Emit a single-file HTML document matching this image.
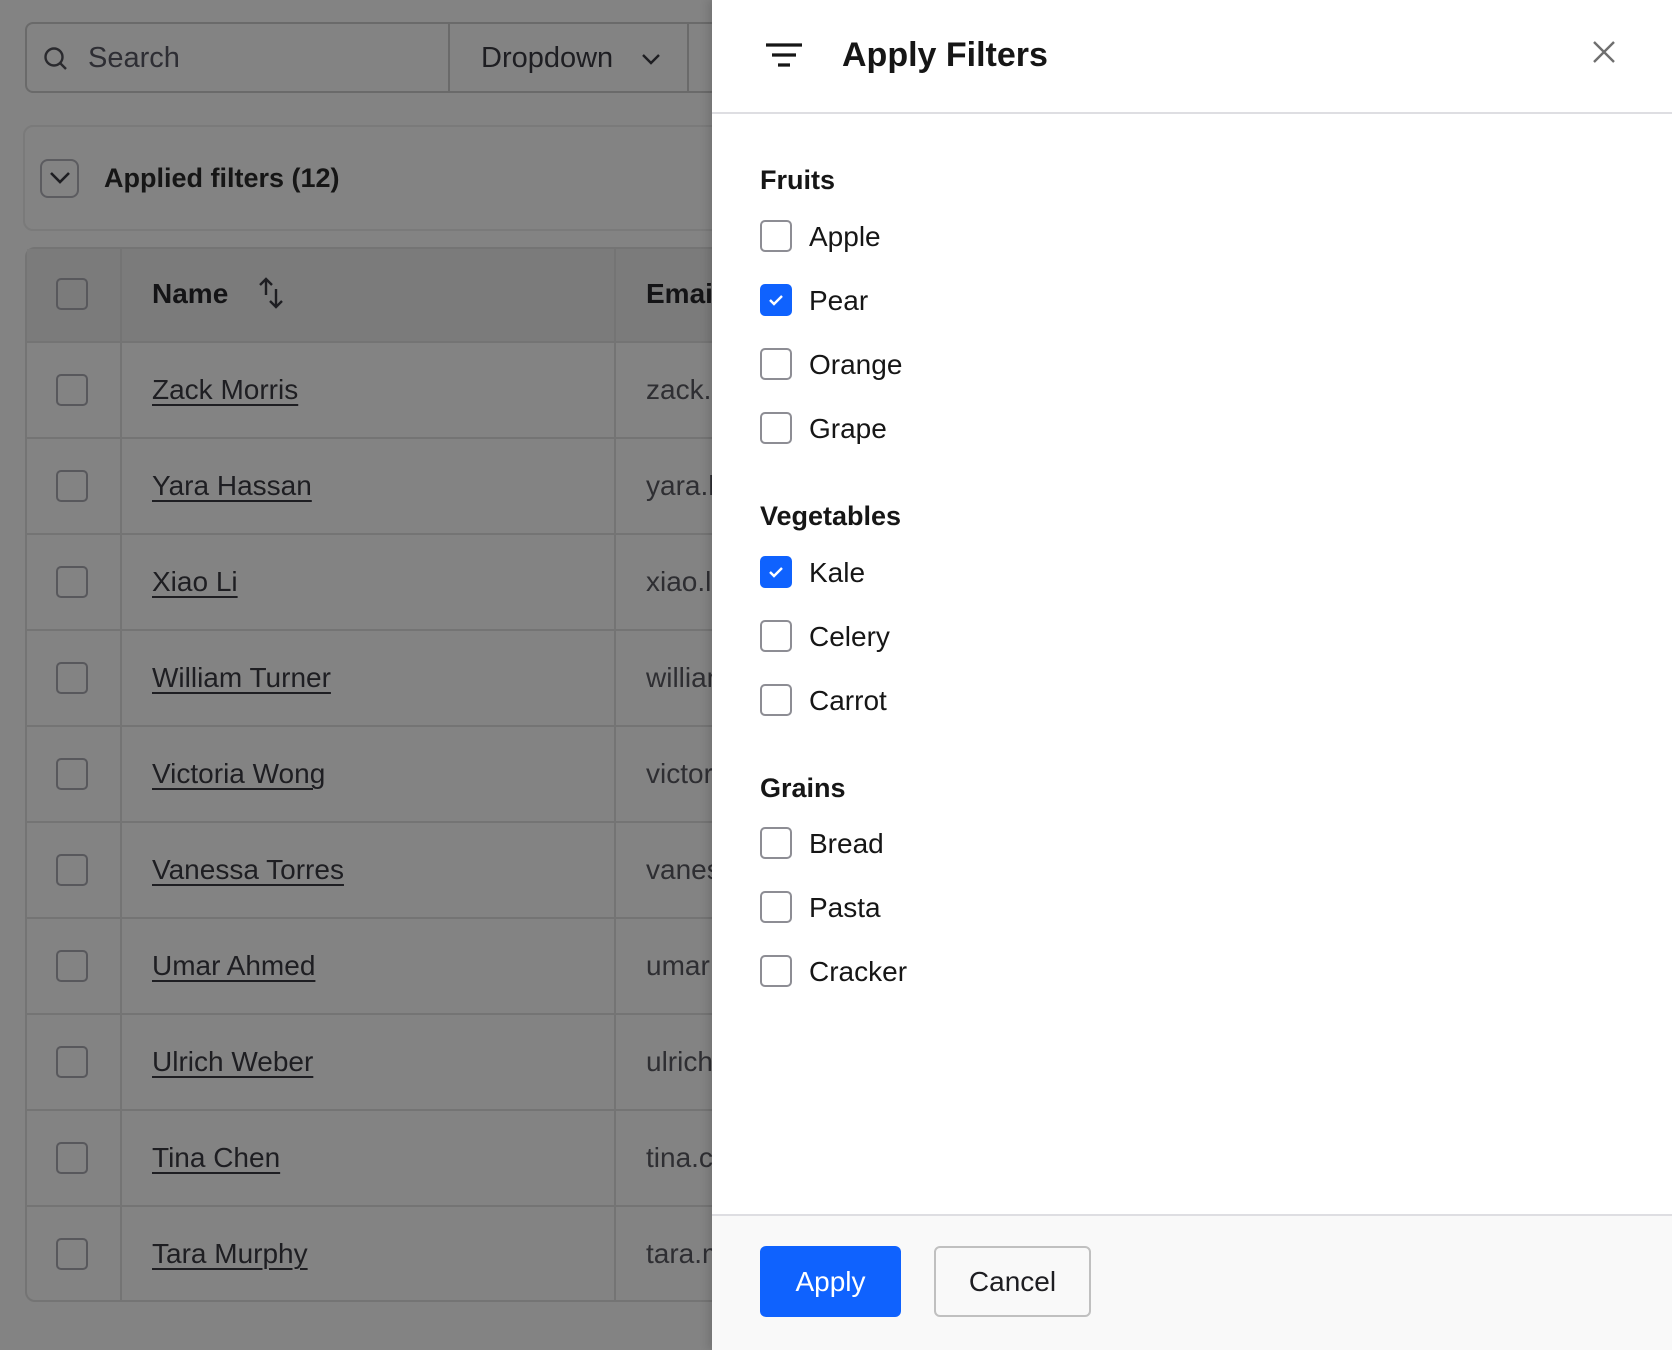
<!DOCTYPE html>
<html><head><meta charset="utf-8"><style>
*{box-sizing:border-box;margin:0;padding:0}
body{width:1672px;height:1350px;overflow:hidden;background:#838383;font-family:"Liberation Sans",sans-serif;position:relative;color:#1c1c20}
.a{position:absolute}
.cb{position:absolute;width:32px;height:32px;border:2px solid #58585c;border-radius:5px}
.name{position:absolute;left:152px;font-size:28px;text-decoration:underline;text-underline-offset:5px;text-decoration-thickness:2px;color:#1e1e22;white-space:nowrap}
.email{position:absolute;left:646px;font-size:28px;color:#2e2e32;white-space:nowrap}
.row{position:absolute;left:25px;width:700px;height:96px;border-top:2px solid #747474}
.panel{position:absolute;left:712px;top:0;width:960px;height:1350px;background:#fff;box-shadow:-4px 0 8px rgba(0,0,0,.12)}
.h{position:absolute;left:48px;font-size:27px;font-weight:bold;color:#161616}
.pc{position:absolute;left:48px;width:32px;height:32px;border:2px solid #8d8d94;border-radius:5px;background:#fff}
.pc.on{background:#0f62fe;border-color:#0f62fe}
.pl{position:absolute;left:97px;font-size:28px;color:#161616}
</style></head><body>
<div class="a" style="left:25px;top:22px;width:700px;height:71px;border:2px solid #6a6a6a;border-radius:8px 0 0 8px"></div>
<div class="a" style="left:448px;top:22px;width:2px;height:71px;background:#6a6a6a"></div>
<div class="a" style="left:687px;top:22px;width:2px;height:71px;background:#6a6a6a"></div>
<svg class="a" style="left:42px;top:45px" width="28" height="28" viewBox="0 0 28 28"><circle cx="12" cy="12" r="8.5" fill="none" stroke="#2a2a2e" stroke-width="2.4"/><path d="M18 18l6 6" stroke="#2a2a2e" stroke-width="2.4"/></svg>
<div class="a" style="left:88px;top:42px;font-size:29px;color:#2e2e34">Search</div>
<div class="a" style="left:481px;top:42px;font-size:29px;color:#1e1e22">Dropdown</div>
<svg class="a" style="left:641px;top:52px" width="20" height="14" viewBox="0 0 20 14"><path d="M2 3l8 8 8-8" fill="none" stroke="#1e1e22" stroke-width="2.4"/></svg>
<div class="a" style="left:23px;top:125px;width:720px;height:106px;border:2px solid #7a7a7a;border-radius:10px"></div>
<div class="a" style="left:40px;top:159px;width:39px;height:39px;border:2px solid #5c5c60;border-radius:8px"></div>
<svg class="a" style="left:48px;top:170px" width="24" height="16" viewBox="0 0 24 16"><path d="M3 3l9 9 9-9" fill="none" stroke="#1e1e22" stroke-width="2.6"/></svg>
<div class="a" style="left:104px;top:163px;font-size:27px;font-weight:bold;color:#161616">Applied filters (12)</div>
<div class="a" style="left:25px;top:247px;width:720px;height:1055px;border:2px solid #747474;border-radius:10px 0 0 10px"></div>
<div class="a" style="left:27px;top:249px;width:700px;height:92px;background:#7b7b7b"></div>
<div class="a" style="left:120px;top:247px;width:2px;height:1055px;background:#747474"></div>
<div class="a" style="left:614px;top:247px;width:2px;height:1055px;background:#747474"></div>
<div class="cb" style="left:56px;top:278px"></div>
<div class="a" style="left:152px;top:278px;font-size:28px;font-weight:bold;color:#141416">Name</div>
<svg class="a" style="left:255px;top:275px" width="34" height="36" viewBox="0 0 34 36"><path d="M11 20V4M5 10l6-6 6 6M21 14v18M15 26l6 6 6-6" fill="none" stroke="#1e1e22" stroke-width="2.4"/></svg>
<div class="a" style="left:646px;top:278px;font-size:28px;font-weight:bold;color:#141416">Email</div>

<div class="row" style="top:341px"></div><div class="cb" style="left:56px;top:374px"></div><div class="name" style="top:374px">Zack Morris</div><div class="email" style="top:374px">zack.morris</div>
<div class="row" style="top:437px"></div><div class="cb" style="left:56px;top:470px"></div><div class="name" style="top:470px">Yara Hassan</div><div class="email" style="top:470px">yara.hassan</div>
<div class="row" style="top:533px"></div><div class="cb" style="left:56px;top:566px"></div><div class="name" style="top:566px">Xiao Li</div><div class="email" style="top:566px">xiao.li</div>
<div class="row" style="top:629px"></div><div class="cb" style="left:56px;top:662px"></div><div class="name" style="top:662px">William Turner</div><div class="email" style="top:662px">william</div>
<div class="row" style="top:725px"></div><div class="cb" style="left:56px;top:758px"></div><div class="name" style="top:758px">Victoria Wong</div><div class="email" style="top:758px">victoria</div>
<div class="row" style="top:821px"></div><div class="cb" style="left:56px;top:854px"></div><div class="name" style="top:854px">Vanessa Torres</div><div class="email" style="top:854px">vanessa</div>
<div class="row" style="top:917px"></div><div class="cb" style="left:56px;top:950px"></div><div class="name" style="top:950px">Umar Ahmed</div><div class="email" style="top:950px">umar</div>
<div class="row" style="top:1013px"></div><div class="cb" style="left:56px;top:1046px"></div><div class="name" style="top:1046px">Ulrich Weber</div><div class="email" style="top:1046px">ulrich</div>
<div class="row" style="top:1109px"></div><div class="cb" style="left:56px;top:1142px"></div><div class="name" style="top:1142px">Tina Chen</div><div class="email" style="top:1142px">tina.chen</div>
<div class="row" style="top:1205px"></div><div class="cb" style="left:56px;top:1238px"></div><div class="name" style="top:1238px">Tara Murphy</div><div class="email" style="top:1238px">tara.murphy</div>

<div class="panel">
  <svg class="a" style="left:54px;top:40px" width="38" height="30" viewBox="0 0 38 30"><path d="M0 5h36M6 15h24M12 25h12" stroke="#161616" stroke-width="3.2"/></svg>
  <div class="a" style="left:130px;top:36px;font-size:34px;font-weight:bold;color:#161616">Apply Filters</div>
  <svg class="a" style="left:880px;top:40px" width="24" height="24" viewBox="0 0 24 24"><path d="M2 2l20 20M22 2L2 22" stroke="#6f6f6f" stroke-width="2.4"/></svg>
  <div class="a" style="left:0;top:112px;width:960px;height:2px;background:#dedee2"></div>

  <div class="h" style="top:165px">Fruits</div>
  <div class="pc" style="top:220px"></div><div class="pl" style="top:221px">Apple</div>
  <div class="pc on" style="top:284px"><svg width="28" height="28" viewBox="0 0 28 28"><path d="M8 14l4 4 8-8" fill="none" stroke="#fff" stroke-width="2.4"/></svg></div><div class="pl" style="top:285px">Pear</div>
  <div class="pc" style="top:348px"></div><div class="pl" style="top:349px">Orange</div>
  <div class="pc" style="top:412px"></div><div class="pl" style="top:413px">Grape</div>

  <div class="h" style="top:501px">Vegetables</div>
  <div class="pc on" style="top:556px"><svg width="28" height="28" viewBox="0 0 28 28"><path d="M8 14l4 4 8-8" fill="none" stroke="#fff" stroke-width="2.4"/></svg></div><div class="pl" style="top:557px">Kale</div>
  <div class="pc" style="top:620px"></div><div class="pl" style="top:621px">Celery</div>
  <div class="pc" style="top:684px"></div><div class="pl" style="top:685px">Carrot</div>

  <div class="h" style="top:773px">Grains</div>
  <div class="pc" style="top:827px"></div><div class="pl" style="top:828px">Bread</div>
  <div class="pc" style="top:891px"></div><div class="pl" style="top:892px">Pasta</div>
  <div class="pc" style="top:955px"></div><div class="pl" style="top:956px">Cracker</div>

  <div class="a" style="left:0;top:1214px;width:960px;height:136px;background:#f9f9f9;border-top:2px solid #dedee2"></div>
  <div class="a" style="left:48px;top:1246px;width:141px;height:71px;background:#0f62fe;border-radius:6px;color:#fff;font-size:28px;text-align:center;line-height:71px">Apply</div>
  <div class="a" style="left:222px;top:1246px;width:157px;height:71px;background:#f9f9f9;border:2px solid #c0c0c0;border-radius:6px;color:#1e1e22;font-size:28px;text-align:center;line-height:67px">Cancel</div>
</div>
</body></html>
